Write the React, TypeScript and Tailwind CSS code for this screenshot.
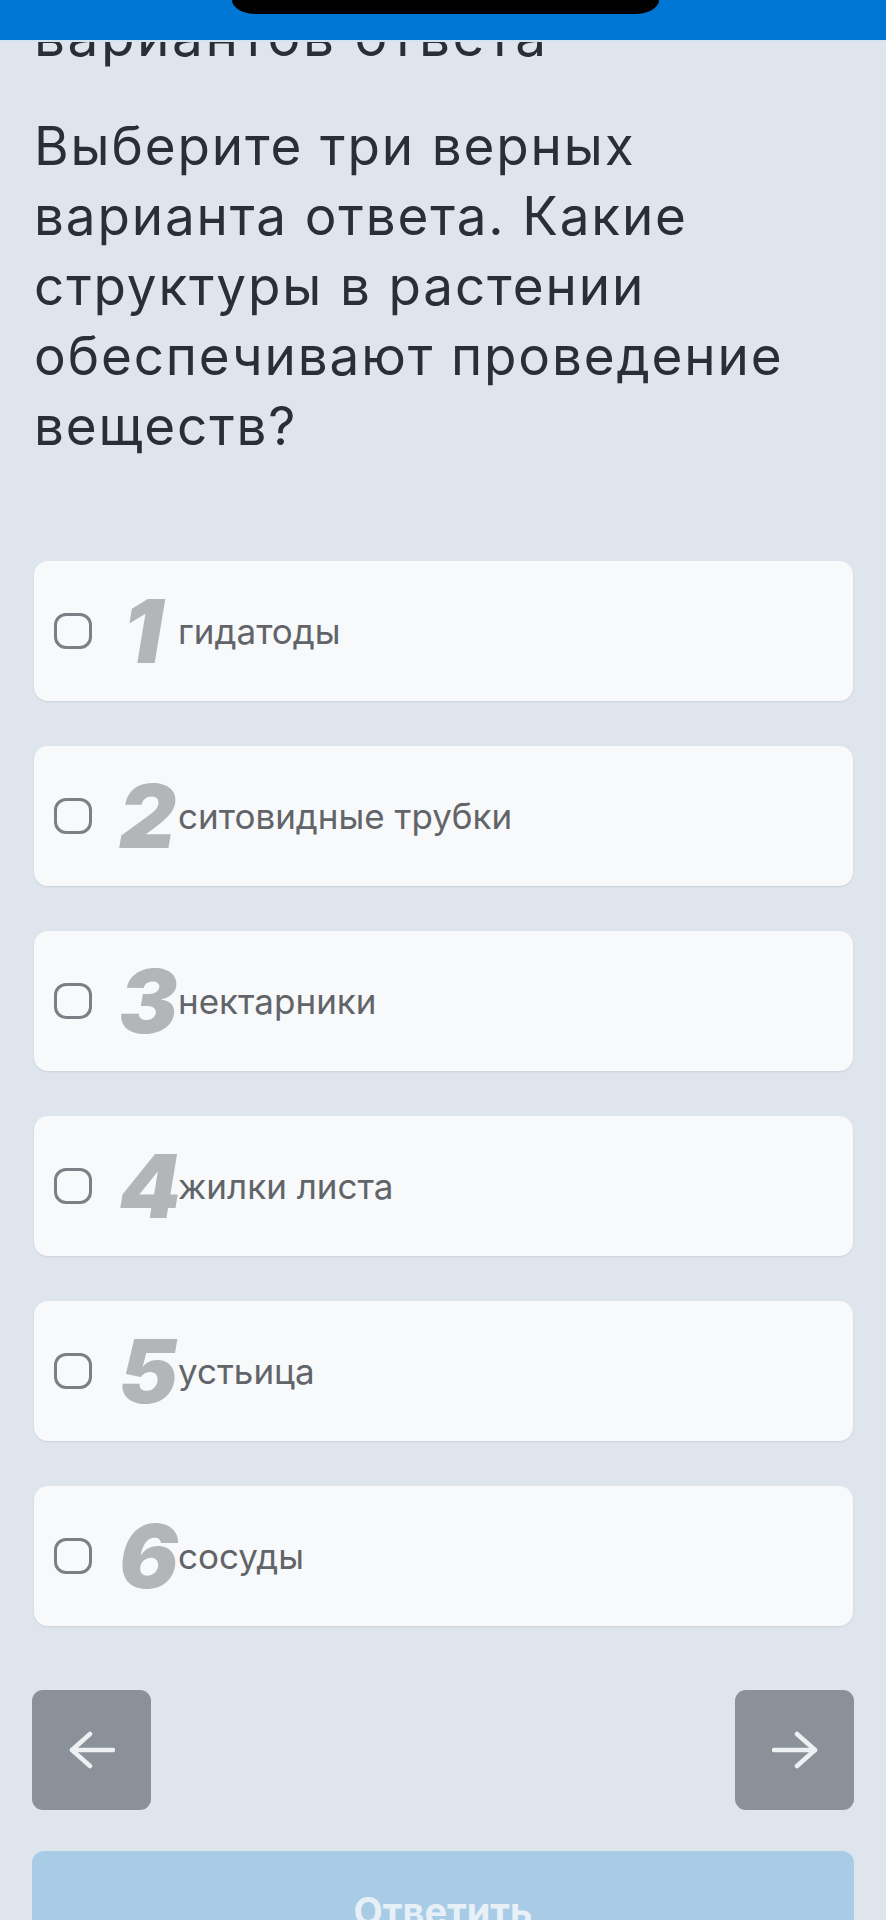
const options = [
  { n: '1', label: 'гидатоды' },
  { n: '2', label: 'ситовидные трубки' },
  { n: '3', label: 'нектарники' },
  { n: '4', label: 'жилки листа' },
  { n: '5', label: 'устьица' },
  { n: '6', label: 'сосуды' },
]

const questionLines = [
  'Выберите три верных',
  'варианта ответа. Какие',
  'структуры в растении',
  'обеспечивают проведение',
  'веществ?',
]

function Arrow({ dir }: { dir: 'left' | 'right' }) {
  return (
    <svg
      width="46"
      height="38"
      viewBox="0 0 46 38"
      fill="none"
      stroke="#eef1f4"
      strokeWidth="4.5"
      strokeLinecap="round"
      strokeLinejoin="round"
      className={dir === 'right' ? 'rotate-180' : ''}
    >
      <path d="M3 19 H44" />
      <path d="M21 3 L3 19 L21 35" />
    </svg>
  )
}

function Option({ n, label }: { n: string; label: string }) {
  return (
    <div className="ml-[2px] mr-[1px] flex h-[140px] items-center rounded-[14px] bg-[#f8f9fb] pl-[20px] shadow-[0_1px_2px_rgba(60,70,90,0.12)]">
      <span className="h-[36px] w-[38px] shrink-0 rounded-[12px] border-[3.5px] border-[#7e7f84]" />
      <span className="ml-[27px] w-[48px] shrink-0 text-center text-[88px] font-black italic leading-none text-[#b3b5b9]">
        {n}
      </span>
      <span className="ml-[11px] text-[35px] leading-none text-[#616468] [font-optical-sizing:none]">{label}</span>
    </div>
  )
}

export default function App() {
  return (
    <div
      className="relative h-[1920px] overflow-hidden bg-[#dfe5ec]"
      style={{ fontFamily: 'Inter, "Noto Sans", sans-serif' }}
    >
      <div className="absolute inset-x-0 top-0 z-10 h-[42px] border-b-2 border-[#d4e3f0] bg-[#0077d5]">
        <div className="absolute left-[232px] top-0 h-[14px] w-[427px] rounded-bl-[24px_14px] rounded-br-[24px_14px] bg-black" />
      </div>

      <div className="px-[32px]">
        <div className="pl-[2px] leading-[70px] text-[#2a2f35] [font-optical-sizing:none]">
          <p className="mt-[1px] text-[55px] tracking-[0.045em]">вариантов ответа</p>
          <h1 className="mt-[40px] text-[53px] font-normal tracking-[0.035em]">
            {questionLines.map(line => (
              <span key={line} className="block whitespace-nowrap">
                {line}
              </span>
            ))}
          </h1>
        </div>

        <div className="mt-[100px] flex flex-col gap-[45px]">
          {options.map(o => (
            <Option key={o.n} n={o.n} label={o.label} />
          ))}
        </div>

        <div className="mt-[64px] flex justify-between">
          <button className="flex h-[120px] w-[119px] items-center justify-center rounded-[11px] bg-[#8a9199]">
            <Arrow dir="left" />
          </button>
          <button className="flex h-[120px] w-[119px] items-center justify-center rounded-[11px] bg-[#8a9199]">
            <Arrow dir="right" />
          </button>
        </div>

        <button className="mt-[41px] flex h-[120px] w-full items-center justify-center rounded-[12px] bg-[#a9cce6] text-[38px] font-bold text-[#e8f0f7]">
          Ответить
        </button>
      </div>
    </div>
  )
}
